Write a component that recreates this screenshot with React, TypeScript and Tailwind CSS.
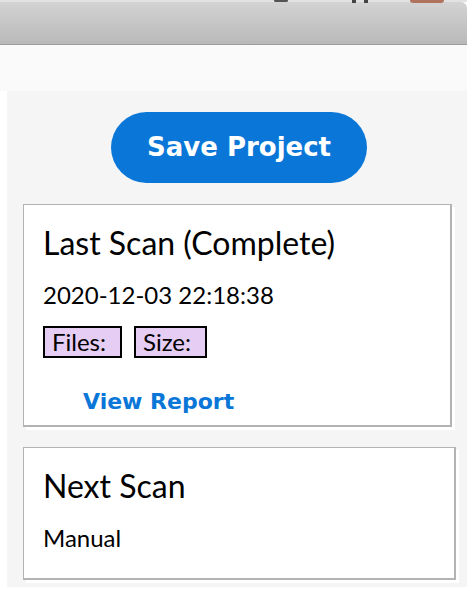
import React from "react";

const lato = { fontFamily: "Lato, 'Noto Sans', sans-serif" };

function Badge({ label }: { label: string }) {
  return (
    <span className="border-2 border-black bg-[#e6cdf3] pl-[7px] pr-[14px] text-[24px] leading-[28px] text-black">
      {label}
    </span>
  );
}

export default function App() {
  return (
    <div className="w-[467px] h-[590px] overflow-hidden bg-white" style={lato}>
      {/* window toolbar, only its lower edge is visible */}
      <div className="relative h-[2px] bg-[#e2e2e2]">
        <div className="absolute left-[274px] top-0 h-[2px] w-[14px] rounded-b-full border-x-2 border-b-2 border-[#555]" />
        <div className="absolute left-[352px] top-0 h-[3px] w-[4px] bg-[#444]" />
        <div className="absolute left-[364px] top-0 h-[3px] w-[4px] bg-[#444]" />
        <div className="absolute left-[410px] top-0 h-[3px] w-[34px] rounded-b-full bg-[#b0735e]" />
      </div>
      <div className="h-[43px] rounded-tr-md border-b border-[#9c9c9c] bg-gradient-to-b from-[#d3d3d3] to-[#b9b9b9]" />
      <div className="h-[46px] bg-[#fafafa]" />

      <div className="ml-[7px] h-[496px] bg-[#f5f5f5] pt-[21px]">
        <div className="flex justify-center pl-[4px]">
          <button
            className="h-[71px] w-[256px] rounded-full bg-[#0a77d8] text-[26px] font-bold text-white"
            style={{ fontFamily: "'DejaVu Sans', Verdana, sans-serif" }}
          >
            Save Project
          </button>
        </div>

        {/* last scan */}
        <div className="ml-[16px] mt-[21px] w-[429px] border border-r-2 border-b-2 border-[#b3b3b3] bg-white pl-[19px] pt-[19px] pb-[10px] shadow-[3px_3px_0_#fff]">
          <h2 className="text-[32px] leading-[38px] text-black">Last Scan (Complete)</h2>
          <p className="mt-[18px] text-[24px] leading-[29px] text-black">2020-12-03 22:18:38</p>
          <div className="mt-[17px] flex gap-[12px]">
            <Badge label="Files:" />
            <Badge label="Size:" />
          </div>
          <button
            className="ml-[40px] mt-[31px] block text-[22px] font-bold leading-[26px] text-[#0a77d8]"
            style={{ fontFamily: "'DejaVu Sans', Verdana, sans-serif" }}
          >
            View Report
          </button>
        </div>

        {/* next scan */}
        <div className="ml-[16px] mt-[20px] w-[433px] border border-r-2 border-b-2 border-[#b3b3b3] bg-white pl-[19px] pt-[19px] pb-[26px] shadow-[3px_3px_0_#fff]">
          <h2 className="text-[32px] leading-[38px] text-black">Next Scan</h2>
          <p className="mt-[18px] text-[24px] leading-[29px] text-black">Manual</p>
        </div>
      </div>
    </div>
  );
}
